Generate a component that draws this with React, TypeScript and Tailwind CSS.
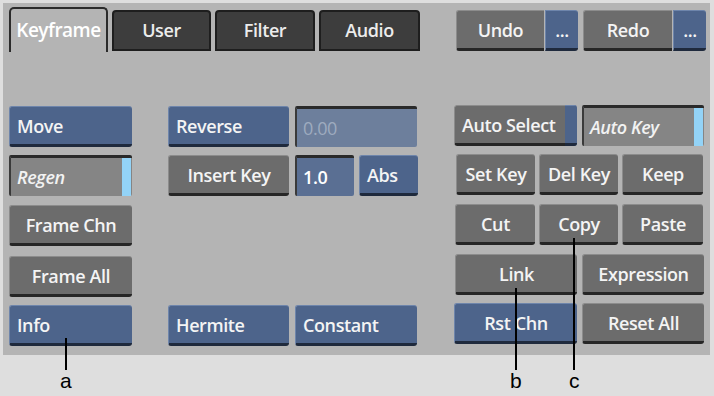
import type { ReactNode } from "react";

type Tone = "gray" | "blue";

const font = { fontFamily: '"Open Sans", "DejaVu Sans", sans-serif' };

function Btn({
	children,
	tone = "gray",
	w,
	align = "center",
	className = "",
}: {
	children: ReactNode;
	tone?: Tone;
	w: string;
	align?: "left" | "center";
	className?: string;
}) {
	const color =
		tone === "blue"
			? "bg-[#4d648b] border-t-[#6e85ab] border-l-[#6e85ab] border-b-[#1f2a3d]"
			: "bg-[#6c6c6c] border-t-[#8c8c8c] border-l-[#8c8c8c] border-b-[#262626]";
	return (
		<div
			className={`${w} h-[41px] shrink-0 rounded-[3px] border-t border-l border-b-[3px] ${color} flex items-center ${
				align === "left" ? "justify-start pl-[7px]" : "justify-center"
			} text-[18px] font-semibold tracking-[-0.4px] text-[#f4f4f4] pt-[2px] ${className}`}
		>
			{children}
		</div>
	);
}

function Field({
	children,
	w,
	bg,
	text,
	italic,
	bar,
}: {
	children: ReactNode;
	w: string;
	bg: string;
	text: string;
	italic?: boolean;
	bar?: boolean;
}) {
	return (
		<div
			className={`${w} h-[41px] shrink-0 rounded-[2px] border-t-[3px] border-l-2 border-t-[#2a2a2a] border-l-[#3a3a3a] ${bg} flex items-center pl-[6px] text-[18px] tracking-[-0.4px] ${
				italic ? "italic" : ""
			} ${text}`}
		>
			<span className="flex-1">{children}</span>
			{bar && <div className="w-[9px] h-full bg-[#93d3f7] mr-[1px]" />}
		</div>
	);
}

function Tab({ label, active, w }: { label: string; active?: boolean; w: string }) {
	return active ? (
		<div
			className={`${w} h-[45px] rounded-t-[5px] border-2 border-b-0 border-[#2b2b2b] bg-[#b4b4b4] flex items-start justify-center pt-[7px] text-[19px] font-semibold tracking-[-0.5px] text-white`}
		>
			{label}
		</div>
	) : (
		<div
			className={`${w} h-[41px] mt-[3px] rounded-t-[4px] border-2 border-[#1e1e1e] bg-[#3d3d3d] flex items-center justify-center text-[18px] font-semibold tracking-[-0.4px] text-[#ececec]`}
		>
			{label}
		</div>
	);
}

function Pointer({ h, label }: { h: string; label: string }) {
	return (
		<div className="flex flex-col items-center">
			<div className={`w-[2px] ${h} bg-black`} />
			<span className="text-[21px] leading-[20px] text-black mt-[1px]" style={{ fontFamily: '"Liberation Sans", sans-serif' }}>
				{label}
			</span>
		</div>
	);
}

export default function App() {
	return (
		<div className="w-[714px] h-[396px] bg-[#dedede] relative overflow-hidden" style={font}>
			<div className="absolute left-[3px] top-[3px] w-[707px] h-[352px] bg-[#b4b4b4] flex">
				{/* left section */}
				<div className="w-[422px] pl-[6px] pt-[4px] flex flex-col">
					<div className="flex gap-[4px] items-start">
						<Tab label="Keyframe" active w="w-[99px]" />
						<Tab label="User" w="w-[99px]" />
						<Tab label="Filter" w="w-[100px]" />
						<Tab label="Audio" w="w-[101px]" />
					</div>
					<div className="flex mt-[54px]">
						<div className="flex flex-col">
							<Btn tone="blue" w="w-[123px]" align="left">Move</Btn>
							<div className="mt-[8px]">
								<Field w="w-[123px]" bg="bg-[#858585]" text="text-[#f2f2f2] font-semibold" italic bar>
									Regen
								</Field>
							</div>
							<Btn w="w-[123px]" className="mt-[9px]">Frame Chn</Btn>
							<Btn w="w-[123px]" className="mt-[10px]">Frame All</Btn>
							<Btn tone="blue" w="w-[123px]" align="left" className="mt-[8px]">Info</Btn>
						</div>
						<div className="flex flex-col ml-[36px]">
							<div className="flex gap-[6px]">
								<Btn tone="blue" w="w-[121px]" align="left">Reverse</Btn>
								<Field w="w-[122px]" bg="bg-[#6d7f9c]" text="text-[#9eabbf] font-normal">
									0.00
								</Field>
							</div>
							<div className="flex gap-[6px] mt-[8px]">
								<Btn w="w-[121px]">Insert Key</Btn>
								<Field w="w-[59px]" bg="bg-[#5a6f93]" text="text-white font-semibold">
									1.0
								</Field>
								<Btn tone="blue" w="w-[59px]" align="left" className="-ml-[1px]">Abs</Btn>
							</div>
							<div className="flex gap-[6px] mt-[109px]">
								<Btn tone="blue" w="w-[121px]" align="left">Hermite</Btn>
								<Btn tone="blue" w="w-[122px]" align="left">Constant</Btn>
							</div>
						</div>
					</div>
				</div>
				{/* right section */}
				<div className="flex-1 pl-[29px] pt-[7px] flex flex-col">
					<div className="flex">
						<Btn w="w-[88px]" className="ml-[2px] rounded-r-none">Undo</Btn>
						<Btn tone="blue" w="w-[33px]" className="ml-[1px] rounded-l-none text-[15px]">...</Btn>
						<Btn w="w-[89px]" className="ml-[5px] rounded-r-none">Redo</Btn>
						<Btn tone="blue" w="w-[33px]" className="ml-[1px] rounded-l-none text-[15px]">...</Btn>
					</div>
					<div className="flex mt-[54px] gap-[5px]">
						<div className="w-[123px] h-[41px] flex rounded-[3px] overflow-hidden">
							<Btn w="w-[111px]" align="left" className="rounded-r-none pl-[4px]">Auto Select</Btn>
							<div className="w-[12px] h-[41px] bg-[#4d648b] border-b-[3px] border-b-[#1f2a3d] border-t border-t-[#6e85ab]" />
						</div>
						<Field w="w-[122px]" bg="bg-[#858585]" text="text-[#f2f2f2] font-semibold" italic bar>
							Auto Key
						</Field>
					</div>
					<div className="flex mt-[8px] gap-[4px] pl-[2px]">
						<Btn w="w-[79px]">Set Key</Btn>
						<Btn w="w-[79px]">Del Key</Btn>
						<Btn w="w-[81px]">Keep</Btn>
					</div>
					<div className="flex mt-[9px] gap-[4px] pl-[1px]">
						<Btn w="w-[80px]">Cut</Btn>
						<Btn w="w-[79px]">Copy</Btn>
						<Btn w="w-[81px]">Paste</Btn>
					</div>
					<div className="flex mt-[9px] gap-[5px] pl-[1px]">
						<Btn w="w-[122px]">Link</Btn>
						<Btn w="w-[122px]">Expression</Btn>
					</div>
					<div className="flex mt-[8px] gap-[5px]">
						<Btn tone="blue" w="w-[123px]">Rst Chn</Btn>
						<Btn w="w-[122px]">Reset All</Btn>
					</div>
				</div>
			</div>
			{/* callouts */}
			<div className="absolute left-[60px] top-[338px]">
				<Pointer h="h-[32px]" label="a" />
			</div>
			<div className="absolute left-[510px] top-[288px]">
				<Pointer h="h-[82px]" label="b" />
			</div>
			<div className="absolute left-[569px] top-[238px]">
				<Pointer h="h-[132px]" label="c" />
			</div>
		</div>
	);
}
